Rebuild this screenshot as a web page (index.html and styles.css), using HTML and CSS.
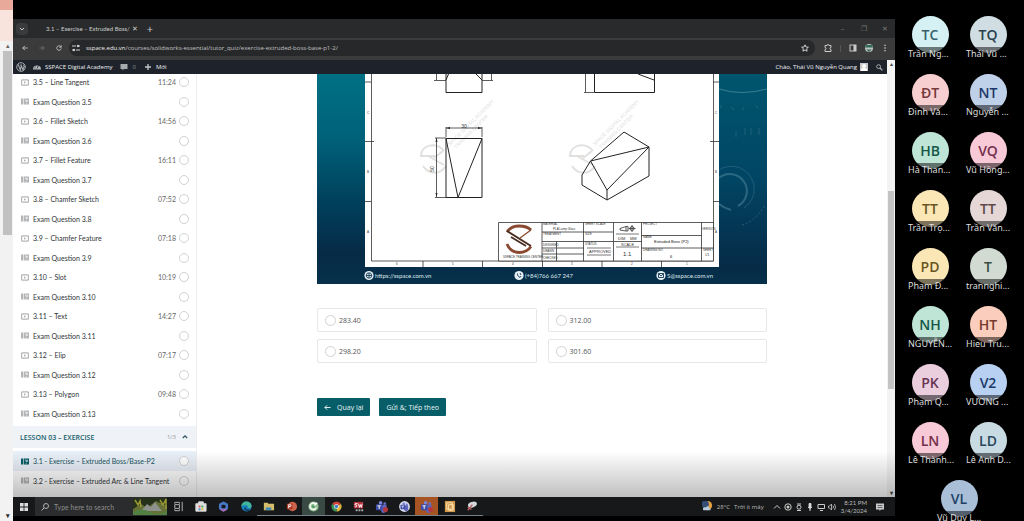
FILE: index.html
```
<!DOCTYPE html>
<html lang="vi">
<head>
<meta charset="utf-8">
<title>3.1 – Exercise – Extruded Boss/Base-P2</title>
<link rel="stylesheet" href="styles.css">
</head>
<body>
<svg class="defs" aria-hidden="true">
  <symbol id="video" viewBox="0 0 8 7"><rect x=".5" y=".8" width="7" height="5.4" rx="1" fill="none" stroke="currentColor" stroke-width="1.300"/><path d="M3 2.2v2.6L5.2 3.5z" fill="currentColor"/></symbol>
  <symbol id="quiz" viewBox="0 0 8 7"><path d="M0 .5h2v6H0zM2.6.5H8v6H2.6z" fill="currentColor"/><path d="M4 2.2h2.4v1.3H5.2v.7M5.2 5v.7" fill="none" stroke="#fff" stroke-width=".7"/></symbol>
  <symbol id="teams" viewBox="0 0 14 14"><circle cx="6" cy="3" r="2" fill="#7a83d8"/><circle cx="10.5" cy="3.8" r="1.5" fill="#6670c4"/><path d="M4 5h8.5v5a3 3 0 0 1-6 1.5z" fill="#5b65bd"/><rect x="1" y="4.5" width="7" height="6.5" rx="1" fill="#3f4ba5"/><path d="M2.7 6.3h3.6M4.5 6.3v3.4" stroke="#fff"/></symbol>
</svg>
<aside class="behind"><div class="behind-top"></div><div class="behind-head"></div><div class="behind-track"><span>▴</span><i></i><b>▾</b></div></aside>

<main class="screen">
  <div class="tabs">
    <button class="tab-search" aria-label="Search tabs"><svg viewBox="0 0 6 6"><path d="M1 2l2 2 2-2" fill="none" stroke="#ccc"/></svg></button>
    <div class="tab"><span class="tab-title">3.1 – Exercise – Extruded Boss/</span><button aria-label="Close tab">✕</button></div>
    <button class="new-tab" aria-label="New tab">+</button>
    <div class="win"><button aria-label="Minimize">–</button><button aria-label="Restore">❐</button><button aria-label="Close">✕</button></div>
  </div>
  <div class="toolbar">
    <button class="tool" aria-label="Back"><svg viewBox="0 0 8 8"><path d="M7.5 4H1m3-3L1 4l3 3" fill="none" stroke="#ddd"/></svg></button>
    <button class="tool" aria-label="Forward"><svg viewBox="0 0 8 8"><path d="M.5 4H7M4 1l3 3-3 3" fill="none" stroke="#777"/></svg></button>
    <button class="tool" aria-label="Reload"><svg viewBox="0 0 8 8"><path d="M6.6 2.5A3 3 0 1 0 7 4.5M7 .5V3H4.5" fill="none" stroke="#ddd"/></svg></button>
    <div class="omnibox">
      <svg class="tune" viewBox="0 0 8 8"><path d="M0 2h4M5 2h3M0 6h3M4 6h4" stroke="#ccc"/><circle cx="6" cy="2" r="1.2" fill="#ccc"/><circle cx="2" cy="6" r="1.2" fill="#ccc"/></svg>
      <span class="url"><b>sspace.edu.vn</b>/courses/solidworks-essential/tutor_quiz/exercise-extruded-boss-base-p1-2/</span>
      <svg class="star" viewBox="0 0 8 8"><path d="M4 .8l1 2.2 2.4.2-1.8 1.6.5 2.4L4 6 1.900 7.200l.5-2.400L.6 3.200 3 3z" fill="none" stroke="#ddd" stroke-width=".9"/></svg>
    </div>
    <div class="tools">
      <svg viewBox="0 0 8 8"><path d="M1 1.500h2a1 1 0 0 1 2 0h2v2a1 1 0 0 0 0 2v2H1v-2a1 1 0 0 0 0-2z" fill="none" stroke="#ccc"/></svg>
      <i></i>
      <svg viewBox="0 0 8 8"><rect x="1" y="1" width="6" height="6" fill="none" stroke="#ccc"/><path d="M4.500 1H7v6H4.500z" fill="#ccc"/></svg>
      <svg viewBox="0 0 8 8"><circle cx="4" cy="4" r="4" fill="#b9c6bf"/><path d="M0 3.500h8L7 1H1z" fill="#356a59"/><path d="M1 5.500h6L4 8z" fill="#456b63"/></svg>
      <svg viewBox="0 0 8 8"><circle cx="4" cy="1.200" r=".8" fill="#ccc"/><circle cx="4" cy="4" r=".8" fill="#ccc"/><circle cx="4" cy="6.800" r=".8" fill="#ccc"/></svg>
    </div>
  </div>

  <div class="page">
    <div class="page-body">
      <nav class="admin">
        <svg class="wp" viewBox="0 0 10 10"><circle cx="5" cy="5" r="4.300" fill="none" stroke="#a7aaad"/><path d="M1.800 3h1.400M2.400 3l1.900 5L5.300 4M4.300 3h1.500M5 3l2 5 1.200-3.500c0-.8-.6-1-.6-1.700" fill="none" stroke="#a7aaad" stroke-width="1.100"/></svg>
        <svg viewBox="0 0 8 8"><path d="M0 6.500a4 4 0 1 1 8 0z" fill="#b4b8bc"/><path d="M4 5.500L5.500 2.500M1.500 5h1M2.200 2.800l.6.6" stroke="#1d2327" stroke-width=".8"/></svg>
        <a href="#">SSPACE Digital Academy</a>
        <svg class="comment" viewBox="0 0 8 8"><path d="M.5 1h7v5H4L2.500 7.500V6h-2z" fill="#a7aaad"/></svg>
        <a href="#" class="dim">0</a>
        <svg class="comment" viewBox="0 0 8 8"><path d="M4 1v6M1 4h6" stroke="#c4c7ca" stroke-width="1.300"/></svg>
        <a href="#">Mới</a>
        <a href="#" class="hello">Chào, Thái Vũ Nguyễn Quang</a>
        <svg viewBox="0 0 8 8"><path d="M0 0h8v8H0z" fill="#c9c9c9"/><circle cx="4" cy="3" r="2" fill="#fff"/><path d="M.8 8a3.200 3.200 0 0 1 6.400 0" fill="#fff"/></svg>
        <svg class="find" viewBox="0 0 8 8"><circle cx="3" cy="3" r="2.200" fill="none" stroke="#b4b8bc"/><path d="M4.600 4.600L7.300 7.300" stroke="#b4b8bc" stroke-width="1.300"/></svg>
      </nav>
      <div class="course">
        <section class="lessons">
          <ul class="list">
            <li class="video"><svg><use href="#video"/></svg><label for="a1">3.5 – Line Tangent</label><time>11:24</time><input type="radio" id="a1"></li>
            <li><svg><use href="#quiz"/></svg><label for="a2">Exam Question 3.5</label><input type="radio" id="a2"></li>
            <li class="video"><svg><use href="#video"/></svg><label for="a3">3.6 – Fillet Sketch</label><time>14:56</time><input type="radio" id="a3"></li>
            <li><svg><use href="#quiz"/></svg><label for="a4">Exam Question 3.6</label><input type="radio" id="a4"></li>
            <li class="video"><svg><use href="#video"/></svg><label for="a5">3.7 – Fillet Feature</label><time>16:11</time><input type="radio" id="a5"></li>
            <li><svg><use href="#quiz"/></svg><label for="a6">Exam Question 3.7</label><input type="radio" id="a6"></li>
            <li class="video"><svg><use href="#video"/></svg><label for="a7">3.8 – Chamfer Sketch</label><time>07:52</time><input type="radio" id="a7"></li>
            <li><svg><use href="#quiz"/></svg><label for="a8">Exam Question 3.8</label><input type="radio" id="a8"></li>
            <li class="video"><svg><use href="#video"/></svg><label for="a9">3.9 – Chamfer Feature</label><time>07:18</time><input type="radio" id="a9"></li>
            <li><svg><use href="#quiz"/></svg><label for="a10">Exam Question 3.9</label><input type="radio" id="a10"></li>
            <li class="video"><svg><use href="#video"/></svg><label for="a11">3.10 – Slot</label><time>10:19</time><input type="radio" id="a11"></li>
            <li><svg><use href="#quiz"/></svg><label for="a12">Exam Question 3.10</label><input type="radio" id="a12"></li>
            <li class="video"><svg><use href="#video"/></svg><label for="a13">3.11 – Text</label><time>14:27</time><input type="radio" id="a13"></li>
            <li><svg><use href="#quiz"/></svg><label for="a14">Exam Question 3.11</label><input type="radio" id="a14"></li>
            <li class="video"><svg><use href="#video"/></svg><label for="a15">3.12 – Elip</label><time>07:17</time><input type="radio" id="a15"></li>
            <li><svg><use href="#quiz"/></svg><label for="a16">Exam Question 3.12</label><input type="radio" id="a16"></li>
            <li class="video"><svg><use href="#video"/></svg><label for="a17">3.13 – Polygon</label><time>09:48</time><input type="radio" id="a17"></li>
            <li><svg><use href="#quiz"/></svg><label for="a18">Exam Question 3.13</label><input type="radio" id="a18"></li>
          </ul>
          <h2 class="topic"><span>LESSON 03 – EXERCISE</span><small>1/3</small><svg viewBox="0 0 6 6"><path d="M.8 4L3 1.800 5.200 4" fill="none" stroke="#29545f" stroke-width="1.200"/></svg></h2>
          <ul class="list exercises">
            <li class="current"><svg><use href="#quiz"/></svg><label for="b1">3.1 - Exercise – Extruded Boss/Base-P2</label><input type="radio" id="b1"></li>
            <li><svg><use href="#quiz"/></svg><label for="b2">3.2 - Exercise – Extruded Arc &amp; Line Tangent</label><input type="radio" id="b2"></li>
          </ul>
        </section>
        <section class="quiz">
          <svg class="slide" viewBox="317 74 450 210" role="img" aria-label="Technical drawing, Extruded Boss (P2)">
            <defs>
              <linearGradient id="bg" x1="0" y1="0" x2="0" y2="1"><stop offset="0" stop-color="#007084"/><stop offset=".3" stop-color="#00627a"/><stop offset=".62" stop-color="#003f5b"/><stop offset=".85" stop-color="#062b47"/><stop offset="1" stop-color="#06304b"/></linearGradient>
              <linearGradient id="bgr" x1="0" y1="0" x2="0" y2="1"><stop offset="0" stop-color="#00566e"/><stop offset=".5" stop-color="#014564"/><stop offset=".92" stop-color="#062b47"/><stop offset="1" stop-color="#06304b"/></linearGradient>
              <g id="mark" fill="none" stroke="#e2e0df" stroke-width="2"><path d="M24 5C16-5 1-1 1 10h14M3 20c6 9 17 9 23 0M8 10l16 9M14 12l9-7"/></g>
            </defs>
            <path d="M317 74h450v210H317z" fill="url(#bg)"/><path d="M719 74h48v210h-48z" fill="url(#bgr)"/>
            <g fill="none" stroke="#5f94a6" stroke-width=".8"><path d="M719 89q22 7 48 0" opacity=".8"/><path d="M721 105v3M731 107l3 3M743 107v3M755 105l3 3M736 131v6M745 128v7M751 128v7M759 128v7" opacity=".4"/><path d="M719 178a17 17 0 1 1 19 28M719 204q5 4 12 6" stroke-width="2" opacity=".45"/><path d="M719 170a22 22 0 1 1 25 38" opacity=".4"/><path d="M742 225q14-4 23-20" stroke-dasharray="2 2" opacity=".5"/></g>
            <path d="M365 74h354v193H365z" fill="#fff"/>
            <use href="#mark" x="420" y="146"/><use href="#mark" x="569" y="146"/>
            <g class="watermark"><text transform="translate(450 146) rotate(-45)">SPACE DIGITAL ACADEMY</text><text transform="translate(456 149) rotate(-45)">TRAINING CENTER</text><text transform="translate(595 146) rotate(-45)">SPACE DIGITAL ACADEMY</text><text transform="translate(601 149) rotate(-45)">TRAINING CENTER</text></g>
            <g fill="none" stroke="#333" stroke-width=".8"><path d="M371.500 74v187h342V74M365 82h6M365 141.500h9M365 201.500h6M713 82h6M710 141.500h9M713 201.500h6M423 261v6M482.500 261v6M542.500 261v6M602 261v6M661.500 261v6"/><path d="M434 80.500h12M436.500 74v6M482 80.500h11M491.500 74v6M584 92.500h10M585.500 74v18M446 128h36M446 127v10M482 127v10M436.500 138v59M435 138h11M435 197.500h11"/></g>
            <g fill="none" stroke="#222"><path d="M446 74v18.500h36V74M448.500 74L446 80M476 74l6 6M594.500 74v18.500h60V74M638 74l16 6M446 138.500h36v59h-36zM446 138.500l12 59 24-59"/><path d="M590.500 161L624 132l25 15v29l-42 24-25-15v-10zM590.500 161L649 147l-42 43zM607 190v10"/></g>
            <path d="M446 128l4-1v2zM482 128l-4-1v2zM436.500 138l-1 4h2zM436.500 197l-1-4h2z" fill="#222"/>
            <g fill="#fff" stroke="#333" stroke-width=".8"><path d="M498.500 222.500h215v38.500h-215zM542 222.500v38.500M583.500 222.500v38.500M613.500 222.500v38.500M641.500 222.500v38.500M701.500 222.500v38.500M542 232h42M542 241.500h71M542 248h42M542 254h42M556.500 241.500v19.500M584 232h29M613.500 241.500h28M641.500 235.500h60M641.500 248h72"/><path d="M587 248h24M587 255h24M616 234h23M616 247h23" stroke="#555"/></g>
            <path d="M531 230q-4-4-12-4-8 0-12 6M507 244q3 8 12 8.500 8 0 12-6" fill="none" stroke="#8a4930" stroke-width="2.800"/><path d="M507 231l24 15M511 237l15 9" fill="none" stroke="#4a2d22" stroke-width="1.800"/><path d="M531 230l-11 8" stroke="#8a4930" stroke-width="1.300"/>
            <path d="M620 228.500l6-2v4.500l-6-1zM626 226.500h2v4.500h-2M632 225v7M628.500 228.500h7" fill="none" stroke="#333" stroke-width=".8"/><circle cx="632" cy="228.500" r="2" fill="none" stroke="#333" stroke-width=".8"/>
            <g class="dims"><text x="464" y="128">30</text><text x="434" y="169" transform="rotate(-90 434 169)">50</text></g>
            <g class="tiny"><text x="367" y="114">C</text><text x="367" y="173">B</text><text x="367" y="233">A</text><text x="715" y="114">C</text><text x="715" y="173">B</text><text x="715" y="233">A</text><text x="396" y="265">6</text><text x="452" y="265">5</text><text x="512" y="265">4</text><text x="571" y="265">3</text><text x="631" y="265">2</text><text x="686" y="265">1</text>
            <text x="543" y="225">MATERIAL</text><text x="553" y="230">PLA Lamp Glass</text><text x="543" y="235">TREATMENT</text><text x="543" y="246">DESIGNED</text><text x="543" y="252">DRAWN</text><text x="543" y="259">CHECKED</text><text x="585" y="225">SHEET SCALE</text><text x="585" y="235">SIZE</text><text x="585" y="245">STATUS</text><text x="643" y="225">PROJECT</text><text x="643" y="238">NAME</text><text x="643" y="251">DRAWING NO</text><text x="702" y="230">VERSION</text><text x="703" y="251">SHEET</text><text x="705" y="256">1/1</text></g>
            <g class="small"><text x="589" y="253">APPROVED</text><text x="618" y="240">DIM</text><text x="630" y="240">MM</text><text x="621" y="246">SCALE</text><text x="503" y="258" class="brand">SSPACE TRAINING CENTER</text></g>
            <g class="title"><text x="654" y="243">Extruded Boss (P2)</text><text x="670" y="258">6</text></g><text x="623" y="256" class="scale">1:1</text>
            <g fill="#e6f0f4"><circle cx="369" cy="275.500" r="4.600"/><circle cx="519" cy="275.500" r="4.600"/><circle cx="661" cy="275.500" r="4.600"/></g>
            <g fill="none" stroke="#123a54" stroke-width=".9"><circle cx="369" cy="275.500" r="2.700"/><path d="M366 275.500h6M369 273v5M517.500 273.500q-1 2 2.500 4l1-1.500M520 273l1 2M658.500 273.500h5v4h-5zl2.500 2.500 2.500-2.500"/></g>
            <g class="contact"><text x="375" y="278">https://sspace.com.vn</text><text x="525" y="278">(+84)766 667 247</text><text x="667" y="278">S@sspace.com.vn</text></g>
          </svg>
          <form class="answers">
            <label><input type="radio" name="answer">283.40</label><label><input type="radio" name="answer">312.00</label>
            <label><input type="radio" name="answer">298.20</label><label><input type="radio" name="answer">301.60</label>
          </form>
          <div class="actions"><button><svg viewBox="0 0 8 8"><path d="M7.500 4H1m2.500-2.500L1 4l2.500 2.500" fill="none" stroke="#fff"/></svg>Quay lại</button><button>Gửi &amp;; Tiếp theo</button></div>
        </section>
      </div>
    </div>
    <div class="scroll"><span>▴</span><i></i><b>▾</b></div>
    <div class="shade"></div>
  </div>

  <footer class="taskbar">
    <button class="start" aria-label="Start"><svg viewBox="0 0 8 8"><path d="M0 0h3.600v3.600H0zM4.400 0H8v3.600H4.400zM0 4.400h3.600V8H0zM4.400 4.400H8V8H4.400z" fill="#ddd"/></svg></button>
    <div class="search"><svg class="glass" viewBox="0 0 8 8"><circle cx="5" cy="3" r="2.500" fill="none" stroke="#bbb" stroke-width=".9"/><path d="M3 5L.5 7.500" stroke="#bbb"/></svg><input type="text" aria-label="Search" placeholder="Type here to search"><svg class="scene" viewBox="0 0 34 17"><path d="M0 0h34v17H0z" fill="#26311b"/><path d="M0 11l8-5 6 4 9-7 11 5v9H0z" fill="#667037"/><path d="M8 13l6-7 4 3 4-5 7 9z" fill="#8d928d"/><path d="M0 14q9-5 17 0t17-2v5H0z" fill="#527f42"/><path d="M2 2l3 5 2-4 1 6M27 2l3 5 3-6v10" fill="none" stroke="#9a9832" stroke-width="1.500"/></svg></div>
    <div class="apps">
      <button aria-label="Task view"><svg viewBox="0 0 14 14"><path d="M3 4V2.500h5V4M3 10v1.500h5V10M3 5h5v4H3zM11 2v10" fill="none" stroke="#bbb"/></svg></button>
      <button aria-label="Store"><svg viewBox="0 0 14 14"><path d="M2 4h11v8H2zM5 4V2h5v2" fill="#ddd" stroke="#ddd"/><path d="M5 6h2v2H5z" fill="#d55"/><path d="M8 6h2v2H8z" fill="#4a4"/><path d="M5 9h2v2H5z" fill="#48c"/><path d="M8 9h2v2H8z" fill="#db3"/></svg></button>
      <button aria-label="Copilot"><svg viewBox="0 0 14 14"><path d="M7 3l3.500 2v4L7 11 3.500 9V5z" fill="none" stroke="#4a78c8" stroke-width="2.800" stroke-linejoin="round"/><path d="M4 10l3 1.500L10 10" stroke="#a66bb2" stroke-width="2" fill="none"/></svg></button>
      <button aria-label="Edge"><svg viewBox="0 0 14 14"><circle cx="7" cy="7" r="5.500" fill="#1681bf"/><path d="M1.500 7c0-7 10-7 11-1 0 4-5 3-4 1-2-3-6-1-7 0z" fill="#42b69a"/><path d="M6 7q0 4 6 3-4 4-8 0z" fill="#15476f"/></svg></button>
      <button class="open" aria-label="File Explorer"><svg viewBox="0 0 14 14"><path d="M2 3h4l1 1h6v7H2z" fill="#d5bd6b"/><path d="M4 8h6v3H4z" fill="#418cb7"/></svg></button>
      <button class="open" aria-label="PowerPoint"><svg viewBox="0 0 14 14"><circle cx="8" cy="7" r="5" fill="#cd624b"/><path d="M2 4h6v6H2z" fill="#a83825"/><path d="M4 9V5h1.500a1 1 0 0 1 0 2H4" fill="none" stroke="#fff"/></svg></button>
      <button class="open green" aria-label="Classroom"><svg viewBox="0 0 14 14"><circle cx="7" cy="7" r="5.500" fill="#92bd91"/><path d="M9 4a3.500 3.500 0 1 0 1 4M7 7l4-4" fill="none" stroke="#fff" stroke-width="1.500"/><circle cx="7" cy="7" r="1.300" fill="#329551"/></svg></button>
      <button class="open" aria-label="Chrome"><svg viewBox="0 0 14 14"><path d="M7 7L2.200 4.300A5.500 5.500 0 0 1 11.800 4.300z" fill="#cf4437"/><path d="M7 7l4.800-2.700A5.500 5.500 0 0 1 7 12.500z" fill="#dfb53c"/><path d="M7 7v5.500A5.500 5.500 0 0 1 2.200 4.300z" fill="#3b9559"/><circle cx="7" cy="7" r="2.500" fill="#fff"/><circle cx="7" cy="7" r="1.800" fill="#3a78cc"/></svg></button>
      <button class="open" aria-label="SolidWorks"><svg viewBox="0 0 14 14"><path d="M2 2h10v7H2z" fill="#b42f3a"/><path d="M6 4q-3-1-3 1 3 0 2 2-1 1-2 0M7 4l1 4 1-3 1 3 1-4" stroke="#fff" fill="none"/><path d="M4 11h8" stroke="#aaa" stroke-width="2" stroke-dasharray="2 1"/></svg></button>
      <button class="open" aria-label="Teams"><svg><use href="#teams"/></svg><i class="alert"></i></button>
      <button class="open" aria-label="Teams personal"><svg viewBox="0 0 14 14"><circle cx="7" cy="7" r="5.800" fill="#d5daeb"/><use href="#teams" x="2" y="2" width="10" height="10"/></svg></button>
      <button class="open orange" aria-label="Teams meeting"><svg><use href="#teams"/></svg><i class="alert"></i></button>
      <button class="open" aria-label="Editor"><svg viewBox="0 0 14 14"><path d="M2 1h11v12H2z" fill="#d39a4d"/><path d="M4 3h6v7H4zM6 5h5v6H6z" fill="none" stroke="#fbe5b4"/></svg></button>
      <button class="open" aria-label="Snipping Tool"><svg viewBox="0 0 14 14"><ellipse cx="8" cy="5" rx="5" ry="3" fill="#d3d9dd" transform="rotate(-20 8 5)"/><path d="M3 11l5-6M3 8l4 2" stroke="#b65d62" stroke-width="1.500"/></svg></button>
    </div>
    <div class="weather"><svg viewBox="0 0 12 12"><circle cx="6" cy="5" r="5" fill="#e5a141"/><circle cx="3.500" cy="3.500" r="4" fill="#344e75"/><path d="M1 9q0-3 3-2 3-3 4 1 2 0 1 2H2q-1 0-1-1" fill="#b8ccdf"/></svg><span>28°C</span><span>Trời ít mây</span></div>
    <div class="tray">
      <svg viewBox="0 0 8 8"><path d="M1 5.500l3-3 3 3" fill="none" stroke="#ccc"/></svg>
      <svg viewBox="0 0 8 8"><circle cx="4" cy="4" r="3.200" fill="none" stroke="#ccc"/><circle cx="4" cy="4" r="1.500" fill="#ccc"/></svg>
      <svg viewBox="0 0 8 8"><path d="M2 1h4M2 7.500h4" stroke="#ccc"/><circle cx="4" cy="4.200" r="2" fill="none" stroke="#ccc"/></svg>
      <svg viewBox="0 0 8 8"><rect x="2.600" width="2.800" height="5" rx="1" fill="#ddd"/><path d="M4 4v4M2 4q2 3 4 0" fill="none" stroke="#ddd"/></svg>
      <svg viewBox="0 0 8 8"><path d="M1 1.500h6.500v4H1zM3 7.500h3" fill="none" stroke="#ccc"/></svg>
      <svg viewBox="0 0 8 8"><path d="M.5 3h1L3.500 1v6l-2-2h-1zM5 2.500q1 1.500 0 3M6.500 1q2 3 0 6" fill="none" stroke="#ccc" stroke-width=".8"/></svg>
    </div>
    <div class="clock"><span>8:21 PM</span><span>3/4/2024</span></div>
    <button class="note" aria-label="Notifications"><svg viewBox="0 0 8 8"><path d="M0 .5h8v6H5L3.500 8V6.500H0z" fill="#ccc"/><path d="M1.500 2.500h5M1.500 4.500h5" stroke="#333" stroke-width=".7"/></svg></button>
  </footer>
</main>

<aside class="people">
  <figure class="c1"><span>TC</span><figcaption>Trần Ng...</figcaption></figure>
  <figure class="c2"><span>TQ</span><figcaption>Thái Vũ ...</figcaption></figure>
  <figure class="c3"><span>ĐT</span><figcaption>Đinh Vă...</figcaption></figure>
  <figure class="c4"><span>NT</span><figcaption>Nguyễn ...</figcaption></figure>
  <figure class="c5"><span>HB</span><figcaption>Hà Than...</figcaption></figure>
  <figure class="c6"><span>VQ</span><figcaption>Vũ Hồng...</figcaption></figure>
  <figure class="c7"><span>TT</span><figcaption>Trần Trọ...</figcaption></figure>
  <figure class="c8"><span>TT</span><figcaption>Trần Văn...</figcaption></figure>
  <figure class="c7"><span>PD</span><figcaption>Phạm Đ...</figcaption></figure>
  <figure class="c9"><span>T</span><figcaption>trannghi...</figcaption></figure>
  <figure class="c5"><span>NH</span><figcaption>NGUYỄN...</figcaption></figure>
  <figure class="c10"><span>HT</span><figcaption>Hieu Tru...</figcaption></figure>
  <figure class="c11"><span>PK</span><figcaption>Phạm Q...</figcaption></figure>
  <figure class="c12"><span>V2</span><figcaption>VƯƠNG ...</figcaption></figure>
  <figure class="c6"><span>LN</span><figcaption>Lê Thành...</figcaption></figure>
  <figure class="c13"><span>LD</span><figcaption>Lê Anh D...</figcaption></figure>
  <figure class="c14"><span>VL</span><figcaption>Vũ Duy L...</figcaption></figure>
</aside>
</body>
</html>
```
FILE: styles.css
```
* { box-sizing: border-box; }
body { margin: 0; height: 100vh; overflow: hidden; background: #000; display: grid; grid-template-columns: 13px 1fr 129px; font-family: "Open Sans", "Noto Sans", sans-serif; font-size: 7px; }
button { border: 0; padding: 0; background: none; color: inherit; font: inherit; }
a { color: inherit; text-decoration: none; }
svg { display: block; flex: none; }
.defs { position: absolute; width: 0; height: 0; }

.behind { display: flex; flex-direction: column; background: #f2f2f2; overflow: hidden; }
.behind-top { height: 10px; background: #e8a89a; }
.behind-head { height: 31px; background: #f8e3dd; }
.behind-track { flex: 1; display: flex; flex-direction: column; padding-left: 3px; color: #666; line-height: 10px; text-align: center; }
.behind-track i { height: 184px; background: #c1c1c1; margin-right: 1px; }
.behind-track b { margin-top: auto; color: #333; }

.screen { display: flex; flex-direction: column; min-width: 0; height: 100vh; padding: 19px 0 5px; }
.tabs { display: flex; align-items: center; height: 19px; padding-left: 3px; background: #292a2b; color: #ccc; }
.tab-search { width: 12px; height: 12px; border-radius: 4px; background: #3a3b3c; }
.tab-search svg { width: 6px; height: 6px; margin: auto; }
.tab { display: flex; align-items: center; justify-content: space-between; width: 106px; margin-left: 4px; padding-left: 14px; }
.tab-title { white-space: nowrap; font-family: Lato, "Noto Sans", sans-serif; font-size: 6px; }
.new-tab { width: 18px; margin-left: 3px; font-size: 11px; line-height: 12px; }
.win { display: flex; margin-left: auto; color: #777; }
.win button { width: 21px; }
.toolbar { display: flex; align-items: center; height: 22px; background: #3b3b3c; padding: 0 0 2px 3px; }
.tool { width: 17px; }
.toolbar svg { width: 8px; height: 8px; }
.tool svg, .apps svg { margin: auto; }
.toolbar .tool svg { width: 6px; height: 6px; }
.omnibox { flex: 1; display: flex; align-items: center; height: 16px; margin-left: 2px; padding: 0 6px 0 3px; border-radius: 8px; background: #27282a; color: #c2c2c2; font-size: 6px; }
.url { margin-left: 6px; white-space: nowrap; }
.url b { color: #eee; font-weight: 400; }
.star { margin-left: auto; }
.tools { display: flex; align-items: center; gap: 8px; padding: 0 6px 0 9px; }
.tools i { width: 1px; height: 7px; background: #555; }

.page { flex: 1; min-height: 0; display: flex; position: relative; background: #fff; overflow: hidden; }
.page-body { flex: 1; min-width: 0; display: flex; flex-direction: column; }
.admin { display: flex; align-items: center; height: 14px; padding: 0 4px 0 3px; background: #1e232b; color: #f0f1f2; font-size: 6px; white-space: nowrap; }
.admin svg { width: 8px; height: 8px; margin-right: 4px; }
.admin .wp { width: 10px; height: 10px; margin-right: 7px; }
.admin .comment { margin: 0 4px 0 8px; }
.admin .dim { color: #8b9096; }
.admin .hello { margin: 0 3px 0 auto; }
.admin .find { width: 7px; height: 7px; margin: 0 0 0 4px; }
.course { flex: 1; min-height: 0; display: flex; }
.lessons { flex: none; width: 184px; border-right: 1px solid #eceef0; overflow: hidden; }
.list { list-style: none; margin: -2px 0 0; padding: 0; color: #303438; font-family: Lato, "Noto Sans", sans-serif; }
.list li { display: flex; align-items: center; height: 19px; padding: 0 7px 0 8px; white-space: nowrap; }
.list .video { height: 20px; }
.list svg { width: 8px; height: 7px; margin-right: 4px; color: #b4b5b7; }
.list label { margin-right: auto; }
.list time { color: #666; margin-right: 3px; }
input[type="radio"] { appearance: none; flex: none; width: 10px; height: 10px; margin: 0; border: 1px solid #d0d2d5; border-radius: 50%; background: #fff; }
.topic { display: flex; align-items: center; height: 22px; margin: 3px 0 3px; padding: 0 8px 0 7px; background: #eff2f6; color: #175e6c; font-size: 7px; font-weight: 600; }
.topic small { margin: 0 6px 0 auto; color: #999; font-size: 6px; font-weight: 400; }
.topic svg { width: 6px; height: 6px; }
.exercises { margin: 0; }
.exercises .current { height: 20px; background: #eaf0f8; color: #205462; }
.list .current svg { color: #075f68; }
.quiz { flex: 1; min-width: 0; padding: 0 120px; }
.slide { width: 100%; height: auto; }
.slide text { font-family: "Liberation Sans", sans-serif; fill: #333; }
.slide .watermark text { font-size: 5px; fill: #dedee0; }
.slide .dims text { font-size: 5px; text-anchor: middle; }
.slide .tiny text { font-size: 3px; }
.slide .small text { font-size: 4px; }
.slide .small .brand { font-size: 3px; }
.slide .title text { font-size: 4px; fill: #111; }
.slide .scale { font-size: 6px; }
.slide .contact text { font-family: Lato, sans-serif; font-size: 6px; fill: #dce7ec; }
.answers { display: grid; grid-template-columns: 1fr 1fr; gap: 7px 11px; margin-top: 24px; color: #555; }
.answers label { display: flex; align-items: center; gap: 3px; height: 24px; padding-left: 7px; border: 1px solid #e6e7e9; border-radius: 2px; }
.answers input[type="radio"] { width: 11px; height: 11px; }
.actions { display: flex; gap: 9px; margin-top: 35px; }
.actions button { display: flex; align-items: center; gap: 6px; height: 18px; padding: 0 7px; border-radius: 1px; background: #075e69; color: #e9f3f4; white-space: nowrap; }
.actions svg { width: 7px; height: 7px; }
.scroll { width: 8px; flex: none; display: flex; flex-direction: column; background: #f3f3f3; color: #444; line-height: 8px; font-size: 6px; text-align: center; }
.scroll i { height: 198px; margin: 123px 1px 0; background: #c4c4c4; }
.scroll b { margin-top: auto; }
.shade { position: absolute; left: 0; right: 0; bottom: 0; height: 46px; background: linear-gradient(transparent, rgba(0, 0, 0, .25)); pointer-events: none; }

.taskbar { display: flex; align-items: center; height: 19px; background: #171819; color: #bbb; white-space: nowrap; }
.start { width: 22px; }
.start svg { width: 8px; height: 8px; margin: auto; }
.search { flex: none; display: flex; align-items: center; width: 132px; height: 19px; padding-left: 6px; background: #2b2c2d; }
.glass { width: 8px; height: 8px; margin-right: 5px; }
.search input { flex: 1; min-width: 0; padding: 0; border: 0; background: none; color: #999; font: inherit; font-family: Lato, sans-serif; }
.search input::placeholder { color: #8c8c8c; opacity: 1; }
.scene { width: 34px; height: 17px; }
.apps { flex: none; display: flex; width: 316px; height: 19px; }
.apps button { flex: 1; position: relative; border-bottom: 1px solid transparent; }
.apps .open { border-color: #75828b; }
.apps .green { background: #394a44; }
.apps .orange { background: #a75424; }
.apps svg { width: 13px; height: 13px; }
.alert { position: absolute; right: 5px; bottom: 3px; width: 5px; height: 5px; border-radius: 50%; background: #b8373c; }
.weather { display: flex; align-items: center; gap: 4px; margin-left: auto; font-size: 6px; }
.weather svg { width: 11px; height: 11px; }
.tray { display: flex; gap: 3px; margin-left: 9px; }
.tray svg { width: 8px; height: 8px; }
.clock { display: flex; flex-direction: column; align-items: flex-end; margin-left: 5px; font-family: Lato, sans-serif; font-size: 6px; line-height: 8px; }
.note { margin: 0 11px 0 9px; }
.note svg { width: 8px; height: 8px; }

.people { display: grid; grid-template-columns: 1fr 1fr; grid-auto-rows: 58px; height: 100vh; padding: 16px 7px 0 6px; overflow: hidden; }
.people figure { margin: 0; display: flex; flex-direction: column; align-items: center; }
.people span { flex: none; width: 37px; height: 37px; border-radius: 50%; background: var(--fill); color: var(--ink); font-size: 14px; font-weight: 600; line-height: 37px; text-align: center; }
.people figcaption { width: 44px; margin-top: -6px; background: rgba(0, 0, 0, .5); color: #ddd; font-family: "Noto Sans", sans-serif; font-size: 9px; line-height: 13px; text-align: left; white-space: nowrap; }
.c1 { --fill: #d5f1f3; --ink: #38606c; }
.c2 { --fill: #d0dde2; --ink: #27404e; }
.c3 { --fill: #f8cfd0; --ink: #74383d; }
.c4 { --fill: #bfd0e9; --ink: #1c3766; }
.c5 { --fill: #bfe5d7; --ink: #145746; }
.c6 { --fill: #f8cad7; --ink: #742f4c; }
.c7 { --fill: #fbe7b5; --ink: #685522; }
.c8 { --fill: #e4d7d6; --ink: #604845; }
.c9 { --fill: #d1dbd2; --ink: #384c40; }
.c10 { --fill: #fbcdbc; --ink: #763b2b; }
.c11 { --fill: #ebcede; --ink: #663353; }
.c12 { --fill: #b8d0f1; --ink: #183968; }
.c13 { --fill: #c8dbe3; --ink: #29485a; }
.people .c14 { grid-column: 1 / -1; --fill: #a9bfd7; --ink: #1e4065; }
```
